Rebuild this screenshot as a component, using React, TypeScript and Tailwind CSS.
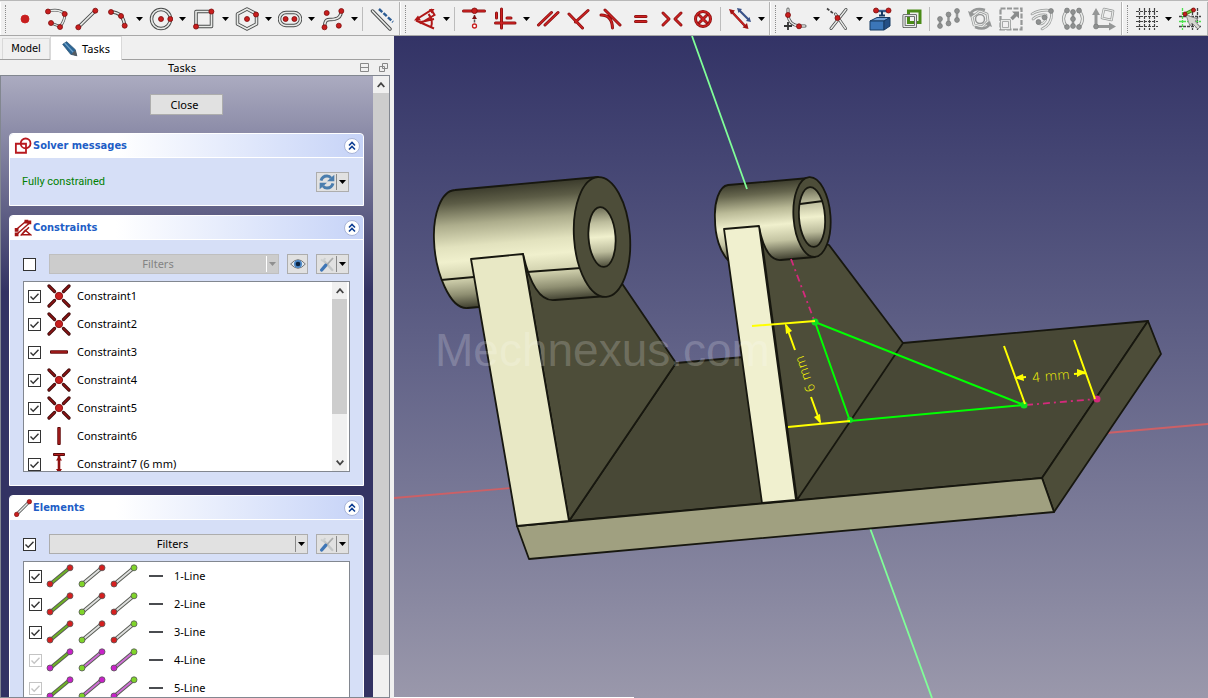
import { useState } from 'react';
import type { ReactNode } from 'react';

const RED = '#c81e1e';
const DARK_RED = '#7c0d0d';

interface Point {
  x: number;
  y: number;
}

function Dot({ x, y, r = 2.5, fill = RED, stroke = DARK_RED }: Point & { r?: number; fill?: string; stroke?: string }) {
  return <circle cx={x} cy={y} r={r} fill={fill} stroke={stroke} strokeWidth={0.8} />;
}

// Outlined stroke: dark below, light on top
function Rail({ d, outer = '#4a4c4c', inner = '#e8eae8', width = 3.5 }: { d: string; outer?: string; inner?: string; width?: number }) {
  return (
    <g fill="none" strokeLinecap="round" strokeLinejoin="round">
      <path d={d} stroke={outer} strokeWidth={width} />
      <path d={d} stroke={inner} strokeWidth={width / 2.1} />
    </g>
  );
}

function RedBar({ d, width = 3 }: { d: string; width?: number }) {
  return <Rail d={d} outer="#8a0f0f" inner="#cc2323" width={width} />;
}

function Icon({ children, className = 'size-6' }: { children: ReactNode; className?: string }) {
  return (
    <svg viewBox="0 0 24 24" className={`${className} shrink-0`} aria-hidden="true">
      {children}
    </svg>
  );
}

interface Tool {
  name: string;
  menu?: boolean;
  icon?: ReactNode;
}

const SEPARATOR: Tool = { name: '|' };

const geometryTools: Tool[] = [
  { name: 'Point', icon: <Dot x={12} y={12} r={4} stroke={RED} /> },
  {
    name: 'Polyline',
    icon: (
      <>
        <Rail d="M4 4.500Q14 1 20.700 7Q21 14 16 19.500L7 16" width={2.800} />
        <Dot x={4} y={4.500} />
        <Dot x={20.700} y={7} />
        <Dot x={16} y={20} />
        <Dot x={7} y={16} />
      </>
    )
  },
  {
    name: 'Line',
    icon: (
      <>
        <Rail d="M3.300 20.300L20.300 3.700" />
        <Dot x={3.300} y={20.300} />
        <Dot x={20.300} y={3.700} />
      </>
    )
  },
  {
    name: 'Arc',
    menu: true,
    icon: (
      <>
        <Rail d="M5 5Q17 5 18.700 18.700" />
        <Dot x={5} y={5} />
        <Dot x={15} y={9} />
        <Dot x={18.700} y={18.700} />
      </>
    )
  },
  {
    name: 'Circle',
    menu: true,
    icon: (
      <>
        <Rail d="M21.500 12A9.500 9.500 0 1 1 2.500 12A9.500 9.500 0 1 1 21.500 12" />
        <Dot x={12} y={12} />
        <Dot x={21.300} y={12} />
      </>
    )
  },
  {
    name: 'Rectangle',
    menu: true,
    icon: (
      <>
        <Rail d="M4 4.500H19.500V19.500H4Z" />
        <Dot x={4} y={19.600} />
        <Dot x={19.400} y={4.500} />
      </>
    )
  },
  {
    name: 'Polygon',
    menu: true,
    icon: (
      <>
        <Rail d="M12 2L21.500 7V17L12 22L2.500 17V7Z" />
        <Dot x={12} y={12} />
        <Dot x={21} y={7.500} />
      </>
    )
  },
  {
    name: 'Slot',
    menu: true,
    icon: (
      <>
        <Rail d="M8 5.500H16A6.500 6.500 0 0 1 16 18.500H8A6.500 6.500 0 0 1 8 5.500Z" />
        <Dot x={7.600} y={12} />
        <Dot x={16.400} y={12} />
      </>
    )
  },
  {
    name: 'B-spline',
    menu: true,
    icon: (
      <>
        <Rail d="M3.500 20C4 9 9 14 14 12Q20 11 20.300 4" />
        <Dot x={5.700} y={6} />
        <Dot x={20.300} y={4} />
        <Dot x={3.500} y={20.300} />
        <Dot x={17.800} y={18.700} />
      </>
    )
  },
  SEPARATOR,
  {
    name: 'Toggle construction geometry',
    icon: (
      <>
        <Rail d="M2.500 4L20 22" />
        <path d="M9 2L23 15" stroke="#2b5c94" strokeWidth={2.400} strokeDasharray="4.500 1.600" />
      </>
    )
  }
];

const constraintTools: Tool[] = [
  {
    name: 'Dimension',
    menu: true,
    icon: (
      <>
        <path d="M4 12L18.500 3L21.500 8L7 16.500M3 13.500L21 21.500M6 15.500L21 12M15.500 7Q20.500 13 18 20" fill="none" stroke="#b01717" strokeWidth={2} />
        <path d="M1 13.500L5 8.500L8 13.500ZM21.500 2L16 2L18.500 6.500Z" fill="#b01717" />
      </>
    )
  },
  SEPARATOR,
  {
    name: 'Constrain coincident',
    icon: (
      <>
        <RedBar d="M1.500 4H22.500" />
        <path d="M12.500 8V17" stroke="#555" strokeWidth={1.500} strokeDasharray="3 1.500" />
        <path d="M10 12L12.500 8L15 12Z" fill={DARK_RED} />
        <Dot x={12.500} y={3.800} r={2.800} />
        <circle cx={12.500} cy={19} r={2} fill="#fff" stroke={RED} strokeWidth={1.300} />
      </>
    )
  },
  {
    name: 'Constrain horizontal or vertical',
    menu: true,
    icon: (
      <>
        <RedBar d="M8.500 2V21M2.500 16H22" />
        <RedBar d="M3.500 6V11M14 11H18" />
      </>
    )
  },
  { name: 'Constrain parallel', icon: <RedBar d="M2.500 18L15.500 5.500M9 18L22 5.500" /> },
  { name: 'Constrain perpendicular', icon: <RedBar d="M2 7L15.500 21M8.500 15L21 3.500" /> },
  { name: 'Constrain tangent', icon: <RedBar d="M3 8Q14 8 14.500 21M7 3L22 18" /> },
  { name: 'Constrain equal', icon: <RedBar d="M6.500 9.500H17M6.500 14.500H17" /> },
  { name: 'Constrain symmetric', icon: <RedBar d="M3 6L9 12L3 18M21 6L15 12L21 18" /> },
  {
    name: 'Constrain block',
    icon: <RedBar d="M19.500 12A7.500 7.500 0 1 1 4.500 12A7.500 7.500 0 1 1 19.500 12M8.500 8.500L15.500 15.500M15.500 8.500L8.500 15.500" />
  },
  SEPARATOR,
  {
    name: 'Toggle driving constraint',
    menu: true,
    icon: (
      <>
        <RedBar d="M4 5L18 20" width={2.500} />
        <path d="M1 2L7 3.500L3 7.500ZM20.500 22L14.500 20.500L19 16Z" fill="#a31212" />
        <path d="M11 3L21 13" stroke="#3b5388" strokeWidth={2.200} />
        <path d="M9 1L14 2L10.500 6ZM23 15L18 14L21.500 10Z" fill="#3b5388" />
      </>
    )
  }
];

const GRAY = '#959797';

function GrayDots({ points }: { points: number[][] }) {
  return (
    <>
      {points.map(([x, y]) => (
        <Dot key={`${x}-${y}`} x={x} y={y} r={2.4} fill="#8f9191" stroke="#7b7d7d" />
      ))}
    </>
  );
}

const editTools: Tool[] = [
  {
    name: 'Create fillet',
    menu: true,
    icon: (
      <>
        <Rail d="M5 2V8Q6 18 16 19H22" width={3} />
        <path d="M5 15V23M1 19H9" stroke="#333" strokeWidth={1.800} />
        <Dot x={5} y={8} />
        <Dot x={16} y={19.300} />
      </>
    )
  },
  {
    name: 'Trim edge',
    menu: true,
    icon: (
      <>
        <Rail d="M20 2.500L5 21.500M9.500 7L19.500 21.500" width={3} />
        <path d="M1 1.500L8 7" stroke="#444" strokeWidth={1.800} strokeDasharray="3 1.500" />
        <Dot x={11.500} y={11} />
      </>
    )
  },
  {
    name: 'External geometry',
    icon: (
      <>
        <path d="M1 14L8 10.500H21L15 14Z" fill="#72a2d8" stroke="#173a63" />
        <path d="M1 14H15V23H1Z" fill="#3b76b8" stroke="#173a63" />
        <path d="M15 14L21 10.500V19L15 23Z" fill="#244f85" stroke="#173a63" />
        <path d="M7 4H19" stroke="#3a5f91" strokeWidth={2.400} />
        <path d="M13 4V9M10 8.500H16" stroke="#173a63" strokeWidth={2} />
        <Dot x={7} y={3.500} />
        <Dot x={19.500} y={3.500} />
      </>
    )
  },
  {
    name: 'Carbon copy',
    icon: (
      <>
        <path d="M8.500 4H20V15.500H8.500Z" fill="none" stroke="#4b8b18" strokeWidth={3} />
        <Rail d="M4 8.500H15.500V19.500H4Z" width={3} />
      </>
    )
  },
  SEPARATOR,
  {
    name: 'Select associated constraints',
    icon: (
      <>
        <path d="M3 12V19M11.500 7V16M20 4V13" stroke={GRAY} strokeWidth={2.500} />
        <GrayDots points={[[3, 12], [3, 19], [11.5, 7.5], [11.5, 16.5], [20, 4], [20, 13]]} />
      </>
    )
  },
  {
    name: 'Select associated geometry',
    icon: (
      <>
        <Rail d="M12 4L19 7L20 14L14 20L6 18L4 10Z" outer={GRAY} width={2.800} />
        <circle cx={12} cy={12} r={4.500} fill="none" stroke={GRAY} strokeWidth={1.500} />
        <path d="M2 7Q7 0 17 3M22 17Q17 24 7 20" fill="none" stroke={GRAY} strokeWidth={2.500} />
        <path d="M0 4L2 10L7 7ZM24 20L22 14L17 17Z" fill={GRAY} />
      </>
    )
  },
  {
    name: 'Scale transform',
    icon: (
      <>
        <path d="M1.500 1.500H22.500V22.500H1.500Z" fill="none" stroke={GRAY} strokeWidth={2.200} strokeDasharray="5 1.500" />
        <Rail d="M2.500 13.500H10.500V21.500H2.500Z" outer={GRAY} width={3} />
        <path d="M12.500 12L18 6.500" stroke="#8a8c8c" strokeWidth={3.500} />
        <path d="M13 4.500H20V11.500Z" fill="#8a8c8c" />
      </>
    )
  },
  {
    name: 'Offset geometry',
    icon: (
      <>
        <Rail d="M2 7Q10 2 21.500 3.500Q23 17 12 22" outer={GRAY} width={2.600} />
        <Rail d="M3 12Q8 7 16 8Q17 15 11 17Q6 17 8 14" outer={GRAY} width={2.600} />
        <GrayDots points={[[21, 4], [14.5, 10.5], [8.5, 15]]} />
      </>
    )
  },
  {
    name: 'Symmetry',
    icon: (
      <>
        <Rail d="M6 3.500Q-1 12 6 20M18 3.500Q25 12 18 20" outer={GRAY} width={3} />
        <path d="M12 5V19" stroke={GRAY} strokeWidth={2.500} />
        <GrayDots points={[[6, 3.5], [6, 20], [18, 3.5], [18, 20], [12, 5], [12, 12], [12, 19]]} />
      </>
    )
  },
  {
    name: 'Remove axes alignment',
    icon: (
      <>
        <path d="M4 20V5M4 19.500H19" stroke={GRAY} strokeWidth={3} />
        <path d="M0 8L4 1L8 8ZM17 15.500L24 19.500L17 23.500Z" fill={GRAY} />
        <Rail d="M12 2L21 4L19.500 13L10 11Z" outer={GRAY} width={2.600} />
        <GrayDots points={[[4, 19.5]]} />
      </>
    )
  }
];

const gridTools: Tool[] = [
  {
    name: 'Toggle grid',
    menu: true,
    icon: (
      <path
        d="M4.500 1V23M9.500 1V23M14.500 1V23M19.500 1V23M1 4.500H23M1 9.500H23M1 14.500H23M1 19.500H23"
        stroke="#444"
        strokeWidth={1.200}
        strokeDasharray="3 1"
      />
    )
  },
  {
    name: 'Toggle snap',
    icon: (
      <>
        <path d="M14.500 1V23M19.500 1V23M1 9.500H23M1 19.500H23" stroke="#444" strokeWidth={1.300} strokeDasharray="3 1" />
        <path d="M4.500 1V23M1 14.500H23" stroke="#4be04b" strokeWidth={1.300} strokeDasharray="3 1" />
        <path d="M8 8L20 12L17 14L22 20L20 22L14 16L12 19Z" fill="#d6d6d0" stroke="#888" />
        <Rail d="M7 7L15 3" outer="#3c7a12" inner="#7ac943" />
        <Dot x={7} y={7} r={2} />
        <Dot x={15.500} y={3} r={2} />
      </>
    )
  }
];

function ToolGroup({ label, tools }: { label: string; tools: Tool[] }) {
  return (
    <div role="toolbar" aria-label={label} className="flex shrink-0 items-center border-x border-l-white border-r-[#b4b4b4] pr-0.5">
      <span className="mr-[3px] ml-1 h-7 w-px border-l border-dotted border-[#8c8c8c]" />
      {tools.map((tool, i) =>
        tool.icon ? (
          <button key={tool.name} type="button" title={tool.name} className="flex h-8 items-center hover:bg-[#e0ecf8]">
            <span className="flex w-[31px] justify-center">
              <Icon>{tool.icon}</Icon>
            </span>
            {tool.menu && (
              <span className="flex w-3 justify-center">
                <Triangle />
              </span>
            )}
          </button>
        ) : (
          <span key={i} className="mx-0.5 h-6 w-0.5 border-l border-[#bcbcbc]" />
        )
      )}
    </div>
  );
}

function Triangle({ className = 'text-black' }: { className?: string }) {
  return (
    <svg viewBox="0 0 7 4" className={`h-1 w-[7px] ${className}`} aria-hidden="true">
      <path d="M0 0H7L3.500 4Z" fill="currentColor" />
    </svg>
  );
}

interface CheckProps {
  label: string;
  defaultChecked?: boolean;
  disabled?: boolean;
}

function Check({ label, defaultChecked = false, disabled = false }: CheckProps) {
  return (
    <span className={`relative flex size-[13px] shrink-0 ${disabled ? 'text-[#c4c4c4]' : 'text-[#333333]'}`}>
      <input
        type="checkbox"
        aria-label={label}
        defaultChecked={defaultChecked}
        disabled={disabled}
        className="peer size-[13px] appearance-none border border-current bg-white"
      />
      <svg viewBox="0 0 13 13" className="pointer-events-none absolute inset-0 hidden peer-checked:block" aria-hidden="true">
        <path d="M2.500 6.500L5.200 9.200L10.500 3.700" fill="none" stroke="currentColor" strokeWidth={1.400} />
      </svg>
    </span>
  );
}

function Chevron({ down = false }: { down?: boolean }) {
  return (
    <svg viewBox="0 0 8 6" className="h-1.5 w-2" aria-hidden="true">
      <path d={down ? 'M0.700 0.700L4 4.500L7.300 0.700' : 'M0.700 5L4 1.200L7.300 5'} fill="none" stroke="#444" strokeWidth={1.800} />
    </svg>
  );
}

interface PanelProps {
  title: string;
  icon: ReactNode;
  children: ReactNode;
}

function Panel({ title, icon, children }: PanelProps) {
  const [open, setOpen] = useState(true);

  return (
    <section className="rounded-t border border-white bg-[#d6dff7]">
      <header className="flex h-6 items-center gap-px rounded-t border-b border-white bg-linear-to-r from-white from-30% to-[#c6d3f7] pr-[3px] pl-1">
        <Icon className="size-[18px]">{icon}</Icon>
        <h2 className="flex-1 font-['DejaVu_Sans_Condensed','DejaVu_Sans',sans-serif] text-[11px] font-bold text-[#215dc6]">{title}</h2>
        <button
          type="button"
          aria-label={`Toggle ${title}`}
          aria-expanded={open}
          onClick={() => setOpen(!open)}
          className="flex size-4 items-center justify-center rounded-full border border-[#a9b5d8] bg-white"
        >
          <svg viewBox="0 0 8 10" className={`h-2.5 w-2 ${open ? '' : 'rotate-180'}`} aria-hidden="true">
            <path d="M1 4.500L4 1.500L7 4.500M1 8.500L4 5.500L7 8.500" fill="none" stroke="#0f3f94" strokeWidth={1.600} />
          </svg>
        </button>
      </header>
      {open && children}
    </section>
  );
}

function SplitButton({ label, children }: { label: string; children: ReactNode }) {
  return (
    <button type="button" aria-label={label} className="flex h-5 w-[33px] shrink-0 items-center border border-[#adadad] bg-[#e1e1e1]">
      <span className="flex flex-1 justify-center">{children}</span>
      <span className="flex h-4 w-3 items-center justify-center border-l border-[#8a8a8a]">
        <Triangle />
      </span>
    </button>
  );
}

function FilterButton({ disabled = false }: { disabled?: boolean }) {
  return (
    <button
      type="button"
      disabled={disabled}
      className={`flex h-5 flex-1 items-center border ${
        disabled ? 'border-[#bfbfbf] bg-[#cccccc] text-[#838383]' : 'border-[#adadad] bg-[#e1e1e1] text-black'
      }`}
    >
      <span className="flex-1 text-center">Filters</span>
      <span className={`flex h-4 w-3 items-center justify-center border-l ${disabled ? 'border-white' : 'border-[#8a8a8a]'}`}>
        <Triangle className={disabled ? 'text-[#8f8f8f]' : 'text-black'} />
      </span>
    </button>
  );
}

function ToolsIcon() {
  return (
    <Icon className="size-4">
      <path d="M7 7L20 21" stroke="#c3c6c6" strokeWidth={3.500} strokeLinecap="round" />
      <path d="M3 5Q7 10 9 3" fill="none" stroke="#cdd0d0" strokeWidth={3} />
      <path d="M21 3L12 13" stroke="#a9abab" strokeWidth={2.500} />
      <path d="M10 14L4 21" stroke="#3f76b6" strokeWidth={5} strokeLinecap="round" />
    </Icon>
  );
}

type ConstraintKind = 'coincident' | 'horizontal' | 'vertical' | 'distance';

const constraintIcons: Record<ConstraintKind, ReactNode> = {
  coincident: (
    <>
      <Rail d="M2 2L7.500 7.500M22 2L16.500 7.500M2 22L7.500 16.500M22 22L16.500 16.500" outer="#3c0808" inner="#8f1616" width={3.200} />
      <Dot x={12} y={12} r={3.700} />
    </>
  ),
  horizontal: <path d="M3.500 10.800H20.500V13.200H3.500Z" fill="#b51f1f" stroke="#5c0b0b" />,
  vertical: <path d="M10.800 3.500H13.200V20.500H10.800Z" fill="#b51f1f" stroke="#5c0b0b" />,
  distance: (
    <>
      <path d="M6.500 1.500H17.500V3.500H6.500Z" fill="#b51f1f" stroke="#5c0b0b" />
      <path d="M12 4V20" stroke="#8f1010" strokeWidth={2.600} />
      <path d="M9 8.500L12 4L15 8.500ZM9 17L12 21.500L15 17Z" fill="#8f1010" />
    </>
  )
};

const constraints: { name: string; kind: ConstraintKind }[] = [
  { name: 'Constraint1', kind: 'coincident' },
  { name: 'Constraint2', kind: 'coincident' },
  { name: 'Constraint3', kind: 'horizontal' },
  { name: 'Constraint4', kind: 'coincident' },
  { name: 'Constraint5', kind: 'coincident' },
  { name: 'Constraint6', kind: 'vertical' },
  { name: 'Constraint7 (6 mm)', kind: 'distance' }
];

const elements = [
  { name: '1-Line', external: false },
  { name: '2-Line', external: false },
  { name: '3-Line', external: false },
  { name: '4-Line', external: true },
  { name: '5-Line', external: true }
];

const GREEN = '#7fd42a';

function ElementIcon({ line, start, end }: { line: string; start: string; end: string }) {
  return (
    <svg viewBox="0 0 28 24" className="h-6 w-7 shrink-0" aria-hidden="true">
      <Rail d="M5 19.500L23 4.500" outer="#5a5d56" inner={line} width={3.800} />
      <Dot x={4} y={20} r={3} fill={start} stroke="#555" />
      <Dot x={24} y={3.800} r={3} fill={end} stroke="#555" />
    </svg>
  );
}

function TasksPane() {
  return (
    <div className="flex min-h-0 flex-1 border border-[#828790]">
      <div className="min-w-0 flex-1 overflow-hidden bg-[#333363] bg-[linear-gradient(#ababc0,#333363_216px)] pr-[9px] pl-2">
        <div className="flex justify-center pt-[18px] pb-[18px]">
          <button type="button" className="h-[21px] w-[73px] border border-[#adadad] bg-[#e1e1e1] pr-1">
            Close
          </button>
        </div>

        <div className="flex flex-col gap-[9px]">
          <Panel
            title="Solver messages"
            icon={
              <g fill="none" stroke="#b8191f" strokeWidth={2.400}>
                <path d="M2.500 9H16V21H2.500Z" />
                <circle cx={15.500} cy={8.500} r={6.500} />
              </g>
            }
          >
            <div className="flex h-[47px] items-center justify-between pr-3.5 pl-3">
              <p className="font-['Roboto',sans-serif] text-[#008000]">Fully constrained</p>
              <SplitButton label="Recompute">
                <Icon className="size-4">
                  <path d="M3 10Q5 3 12 3Q16 3 18 6M21 14Q19 21 12 21Q8 21 6 18" fill="none" stroke="#4a7dae" strokeWidth={4.500} />
                  <path d="M23 1V11H12ZM1 23V13H12Z" fill="#4a7dae" />
                </Icon>
              </SplitButton>
            </div>
          </Panel>

          <Panel
            title="Constraints"
            icon={
              <>
                <path d="M3 14L16 3M3 21L21 5M9 22L20 11M10 21H22L15 15Z" fill="none" stroke="#a31515" strokeWidth={2} />
                <path d="M1 12H6V17H1ZM14 1H19V6H14ZM18 2H23V7H18ZM1 18H6V23H1Z" fill="#a31515" />
              </>
            }
          >
            <div className="flex items-center px-3.5 pt-3.5 pb-[7px] pl-[13px]">
              <Check label="Select all constraints" />
              <span className="w-[13px]" />
              <FilterButton disabled />
              <button
                type="button"
                aria-label="Show or hide constraints"
                className="mx-2 flex h-5 w-[21px] items-center justify-center border border-[#adadad] bg-[#e1e1e1]"
              >
                <Icon className="size-4">
                  <path d="M1 12Q12 -1 23 12Q12 25 1 12Z" fill="#dfe6ec" stroke="#777" strokeWidth={1.500} />
                  <circle cx={12} cy={12} r={6} fill="#4b86c4" />
                  <circle cx={12} cy={12} r={3.500} fill="#0c2340" />
                </Icon>
              </button>
              <SplitButton label="Constraint settings">
                <ToolsIcon />
              </SplitButton>
            </div>
            <div className="mx-[13px] mb-[13px] flex h-[191px] border border-[#828790] bg-white">
              <ul className="flex-1 overflow-hidden">
                {constraints.map((item) => (
                  <li key={item.name} className="flex h-7 items-center pl-1">
                    <Check label={item.name} defaultChecked />
                    <span className="w-1.5" />
                    <Icon>{constraintIcons[item.kind]}</Icon>
                    <span className="pl-1.5">{item.name}</span>
                  </li>
                ))}
              </ul>
              <div className="mr-0.5 flex w-[15px] flex-col items-center bg-[#f0f0f0]">
                <span className="flex h-[17px] items-center">
                  <Chevron />
                </span>
                <span className="h-[115px] w-full bg-[#cdcdcd]" />
                <span className="mt-auto flex h-[17px] items-center">
                  <Chevron down />
                </span>
              </div>
            </div>
          </Panel>

          <Panel
            title="Elements"
            icon={
              <>
                <Rail d="M3 21L21 3" width={4} />
                <Dot x={3.500} y={20.500} r={3} />
                <Dot x={20.500} y={3.500} r={3} />
              </>
            }
          >
            <div className="flex items-center px-3.5 pt-3.5 pb-[7px] pl-[13px]">
              <Check label="Select all elements" defaultChecked />
              <span className="w-[13px]" />
              <FilterButton />
              <span className="w-2" />
              <SplitButton label="Element settings">
                <ToolsIcon />
              </SplitButton>
            </div>
            <ul className="mx-[13px] mb-[13px] h-[191px] overflow-hidden border border-[#828790] bg-white">
              {elements.map((item) => {
                const point = item.external ? '#c822c8' : '#d42020';
                const line = item.external ? '#cf6fd6' : '#dfe0df';
                return (
                  <li key={item.name} className="flex h-7 items-center gap-1 pl-[5px]">
                    <Check label={item.name} defaultChecked disabled={item.external} />
                    <ElementIcon line="#6fb324" start={point} end={point} />
                    <ElementIcon line={line} start={GREEN} end={point} />
                    <ElementIcon line={line} start={point} end={GREEN} />
                    <span className="mx-[7px] h-0.5 w-3.5 bg-[#4a4c50]" />
                    <span>{item.name}</span>
                  </li>
                );
              })}
            </ul>
          </Panel>
        </div>
      </div>

      <div className="flex w-4 flex-col items-center bg-[#f0f0f0]">
        <span className="flex h-[17px] items-center">
          <Chevron />
        </span>
        <span className="mb-[42px] w-full flex-1 bg-[#cdcdcd]" />
      </div>
    </div>
  );
}

function Sidebar() {
  return (
    <aside className="flex w-[394px] shrink-0 flex-col bg-[#f0f0f0] pr-1">
      <nav role="tablist" className="flex h-6 shrink-0 items-end border-b border-[#a0a0a0] pl-0.5">
        <button
          type="button"
          role="tab"
          aria-selected={false}
          className="h-[21px] w-12 border border-b-0 border-[#d9d9d9] font-['DejaVu_Sans_Condensed','DejaVu_Sans',sans-serif]"
        >
          Model
        </button>
        <button
          type="button"
          role="tab"
          aria-selected
          className="-mb-px flex h-6 w-[72px] items-center justify-center gap-1 border border-b-0 border-[#d9d9d9] bg-white"
        >
          <Icon className="size-4">
            <path d="M1 5L7 1L20 13L22 22L13 20Z" fill="#2a6595" stroke="#173f61" />
            <path d="M4 3L17 17" stroke="#6ea0c8" strokeWidth={2} />
            <path d="M14 20L20 14L23 23Z" fill="#555b60" />
          </Icon>
          Tasks
        </button>
      </nav>
      <div className="flex h-[15px] shrink-0 items-center pr-0.5">
        <h1 className="flex-1 pl-1 text-center">Tasks</h1>
        <button type="button" aria-label="Minimize" className="mr-2.5">
          <svg viewBox="0 0 9 9" className="size-[9px]" fill="none" stroke="#888">
            <path d="M0.500 0.500H8.500V8.500H0.500ZM0.500 4.500H8.500" />
          </svg>
        </button>
        <button type="button" aria-label="Float">
          <svg viewBox="0 0 9 9" className="size-[9px]" fill="none" stroke="#888">
            <path d="M3.500 5.500V0.500H8.500V5.500ZM0.500 3.500H5.500V8.500H0.500Z" />
          </svg>
        </button>
      </div>
      <TasksPane />
    </aside>
  );
}

function ModelView() {
  return (
    <main className="min-w-0 flex-1 bg-linear-to-b from-[#333366] to-[#9a98ab]">
      <svg viewBox="394 36 814 662" preserveAspectRatio="xMidYMid slice" className="size-full" role="img" aria-label="3D view">
        <defs>
          <linearGradient id="bigTube" gradientUnits="userSpaceOnUse" x1="514" y1="184" x2="524" y2="304">
            <stop offset="0" stopColor="#3a3a2b" />
            <stop offset="0.120" stopColor="#5c5c46" />
            <stop offset="0.300" stopColor="#adad8c" />
            <stop offset="0.480" stopColor="#e2e2be" />
            <stop offset="0.600" stopColor="#f0f0cd" />
            <stop offset="0.750" stopColor="#cfcfac" />
            <stop offset="0.880" stopColor="#8f8f72" />
            <stop offset="1" stopColor="#3a3a2b" />
          </linearGradient>
          <linearGradient id="smallTube" gradientUnits="userSpaceOnUse" x1="768" y1="181" x2="775" y2="261">
            <stop offset="0" stopColor="#3a3a2b" />
            <stop offset="0.150" stopColor="#66664e" />
            <stop offset="0.350" stopColor="#b9b996" />
            <stop offset="0.550" stopColor="#f0f0cd" />
            <stop offset="0.750" stopColor="#c4c4a2" />
            <stop offset="1" stopColor="#3a3a2b" />
          </linearGradient>
          <linearGradient id="bore" x1="0" y1="0" x2="0" y2="1">
            <stop offset="0" stopColor="#6b6b54" />
            <stop offset="0.250" stopColor="#bcbc9c" />
            <stop offset="0.500" stopColor="#f0f0cd" />
            <stop offset="0.750" stopColor="#bcbc9c" />
            <stop offset="1" stopColor="#4a4a38" />
          </linearGradient>
        </defs>

        {/* Axes */}
        <path d="M394 498L512 488M1106 433L1208 424" stroke="#cc6066" strokeWidth={1.800} />
        <path d="M870 528L932 698" stroke="#80ff98" strokeWidth={1.800} />

        {/* Plate and ribs */}
        <g stroke="#17170f" strokeWidth={1.800} strokeLinejoin="round">
          <path d="M569 521L676 363L903 343L1148 321L1042 478Z" fill="#484836" />
          <path d="M523 254L600 250L623 285L676 363L569 521Z" fill="#4d4d39" />
          <path d="M760 227L829 245L903 343L797 500Z" fill="#4d4d39" />
          <path d="M1148 321L1161 354L1054 512L1042 478Z" fill="#4d4d39" />
          <path d="M517 526L1042 478L1054 512L529 559Z" fill="#a0a080" />
        </g>

        {/* Left tube */}
        <g stroke="#17170f" strokeWidth={1.800} strokeLinejoin="round">
          <path
            d="M598 177L455 190C440 191 433 217 434 240C435 272 450 310 468 308L479 307L523 254C530 284 540 302 555 300L607 296Z"
            fill="url(#bigTube)"
          />
          <path d="M441 280L474 277M527 272L581 268" fill="none" />
          <ellipse cx={602} cy={237} rx={28} ry={60} transform="rotate(-4 602 237)" fill="#4d4d39" />
          <ellipse cx={602} cy={237} rx={13.500} ry={30} transform="rotate(-4 602 237)" fill="url(#bore)" />
          <path d="M471 259L523 254L569 521L517 526Z" fill="#e8e8c5" />
        </g>

        {/* Right tube */}
        <g stroke="#17170f" strokeWidth={1.800} strokeLinejoin="round">
          <path
            d="M809 178L728 185C719 186 714 203 715 219C715 236 720 252 728 260L759 227C763 247 770 261 781 260L815 257Z"
            fill="url(#smallTube)"
          />
          <ellipse cx={812} cy={217} rx={18.500} ry={40} transform="rotate(-4 812 217)" fill="#4d4d39" />
          <ellipse cx={812} cy={217} rx={13} ry={30} transform="rotate(-4 812 217)" fill="url(#bore)" />
          <path d="M800 204L823 201" />
          <path d="M724 229L759 226L796 500L762 503Z" fill="#f0f0cf" />
        </g>
        <path d="M692 36L747 189" stroke="#80ff98" strokeWidth={1.800} />

        <text x="435" y="366" fontSize="46" fill="#ffffff" fillOpacity={0.2} className="font-['Liberation_Sans',Arial,sans-serif]">
          Mechnexus.com
        </text>

        {/* Sketch */}
        <path d="M791 259L814 320M1026 405L1096 399" stroke="#d42a7c" strokeWidth={1.800} strokeDasharray="7 4 2 4" />
        <path d="M815 322L850 421L1024 405Z" fill="none" stroke="#00ff00" strokeWidth={2} />
        <g fill="#10e020">
          <circle cx={815} cy={322} r={3.500} />
          <circle cx={850} cy={420} r={3} />
          <circle cx={1024} cy={405} r={3.500} />
        </g>
        <circle cx={1097} cy={399} r={3.500} fill="#d42a7c" />

        {/* Dimensions */}
        <g stroke="#ffff00" strokeWidth={2} fill="none">
          <path d="M752 326L815 321M788 427L850 421M786 325L795 350M811 397L820 422" />
          <path d="M1004 346L1025 404M1074 340L1095 399M1015 378L1026 377M1074 374L1085 373" />
        </g>
        <g fill="#ffff00">
          <path d="M785 323L792 331L786 334ZM821 424L814 417L820 414Z" />
          <path d="M1014 378L1023 374L1024 381ZM1086 372L1077 369L1077 377Z" />
          <text
            x="1051"
            y="376"
            fontSize="13"
            textAnchor="middle"
            dominantBaseline="central"
            transform="rotate(-5 1051 376)"
            className="font-['DejaVu_Sans',sans-serif] font-extralight"
          >
            4 mm
          </text>
          <text
            x="805"
            y="374"
            fontSize="13"
            textAnchor="middle"
            dominantBaseline="central"
            transform="rotate(-109 805 374)"
            className="font-['DejaVu_Sans',sans-serif] font-extralight"
          >
            6 mm
          </text>
        </g>
        <path d="M394 697.500H634" stroke="#ffffff" />
      </svg>
    </main>
  );
}

export default function App() {
  return (
    <div className="flex h-screen flex-col overflow-hidden bg-[#f0f0f0] font-['Noto_Sans',sans-serif] text-[11px] leading-4 text-black">
      <div className="flex h-9 shrink-0 overflow-hidden border-t border-b border-t-[#b8b8b8] border-b-[#a8a8a8] pt-px">
        <ToolGroup label="Sketcher geometries" tools={geometryTools} />
        <ToolGroup label="Sketcher constraints" tools={constraintTools} />
        <ToolGroup label="Sketcher tools" tools={editTools} />
        <ToolGroup label="Sketcher edit tools" tools={gridTools} />
      </div>
      <div className="flex min-h-0 flex-1">
        <Sidebar />
        <ModelView />
      </div>
    </div>
  );
}
